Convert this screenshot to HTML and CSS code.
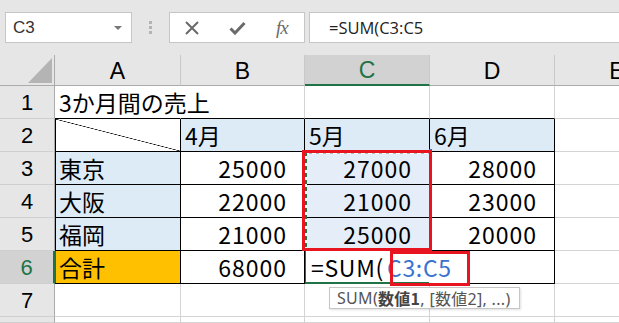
FILE: index.html
```html
<!DOCTYPE html>
<html lang="ja">
<head>
<meta charset="utf-8">
<title>SUM</title>
<link rel="stylesheet" href="styles.css">
</head>
<body>
<div class="topbar">
  <div class="namebox"><span class="ref">C3</span><span class="dd"></span></div>
  <div class="grip"><i></i><i></i><i></i></div>
  <div class="fxbox">
    <svg class="ic-x" width="16" height="16" viewBox="0 0 16 16"><path d="M2 2L14 14M14 2L2 14" stroke="#6a6a6a" stroke-width="2" fill="none"/></svg>
    <svg class="ic-ok" width="17" height="14" viewBox="0 0 17 14"><path d="M1.5 7.5L6 12L15.5 2" stroke="#6a6a6a" stroke-width="3" fill="none"/></svg>
    <span class="fx">fx</span>
  </div>
  <div class="formula">=SUM(C3:C5</div>
</div>
<div class="sheet">
  <div class="corner"><div class="tri"></div></div>
  <div class="ch">A</div>
  <div class="ch">B</div>
  <div class="ch sel">C</div>
  <div class="ch">D</div>
  <div class="ch">E</div>

  <div class="rh">1</div>
  <div class="c tt ov">3か月間の売上</div>
  <div class="c tt"></div>
  <div class="c tt"></div>
  <div class="c tt"></div>
  <div class="c"></div>

  <div class="rh">2</div>
  <div class="c t la diag"></div>
  <div class="c t blue">4月</div>
  <div class="c t blue">5月</div>
  <div class="c t blue">6月</div>
  <div class="c"></div>

  <div class="rh">3</div>
  <div class="c t la blue">東京</div>
  <div class="c t n">25000</div>
  <div class="c t n selc">27000</div>
  <div class="c t n">28000</div>
  <div class="c"></div>

  <div class="rh">4</div>
  <div class="c t la blue">大阪</div>
  <div class="c t n">22000</div>
  <div class="c t n selc">21000</div>
  <div class="c t n">23000</div>
  <div class="c"></div>

  <div class="rh">5</div>
  <div class="c t la blue">福岡</div>
  <div class="c t n">21000</div>
  <div class="c t n selc">25000</div>
  <div class="c t n">20000</div>
  <div class="c"></div>

  <div class="rh sel">6</div>
  <div class="c t la org">合計</div>
  <div class="c t n">68000</div>
  <div class="c t edit">=SUM(<span class="refc">C3:C5</span><span class="caret"></span></div>
  <div class="c t"></div>
  <div class="c"></div>

  <div class="rh">7</div>
  <div class="c"></div>
  <div class="c"></div>
  <div class="c"></div>
  <div class="c"></div>
  <div class="c"></div>

  <div class="rh"></div>
  <div class="c"></div>
  <div class="c"></div>
  <div class="c"></div>
  <div class="c"></div>
  <div class="c"></div>

  <div class="ants"></div>
  <div class="hnd h1"></div>
  <div class="hnd h2"></div>
  <div class="hnd h3"></div>
  <div class="redbox r1"></div>
  <div class="redbox r2"></div>
  <div class="tip">SUM(<b>数値1</b>, [数値2], ...)</div>
</div>
</body>
</html>
```
FILE: styles.css
```css
* { box-sizing: border-box; margin: 0; padding: 0; }
html, body { width: 619px; height: 323px; overflow: hidden; }
body { background: #fff; font-family: "Liberation Sans", Arial, sans-serif; }

.topbar { height: 55px; background: #e6e6e6; display: flex; align-items: flex-start; padding: 12px 0 0 5px; }
.namebox { width: 127px; height: 31px; background: #fff; border: 1px solid #c6c6c6; display: flex; align-items: center; justify-content: space-between; padding: 0 9px 0 7px; font-size: 17px; color: #333; }
.dd { width: 0; height: 0; border-left: 4px solid transparent; border-right: 4px solid transparent; border-top: 4px solid #777; }
.grip { display: flex; flex-direction: column; gap: 2px; margin: 9px 17px 0 17px; }
.grip i { display: block; width: 3px; height: 3px; background: #b4b4b4; }
.fxbox { width: 136px; height: 31px; background: #fff; border: 1px solid #c6c6c6; display: flex; align-items: center; padding-left: 14px; }
.ic-ok { margin-left: 29px; }
.fx { margin-left: 30px; font-family: "Liberation Serif", "Times New Roman", serif; font-style: italic; font-size: 19px; color: #6a6a6a; letter-spacing: -1px; }
.formula { flex: 1; margin-left: 4px; height: 31px; background: #fff; border: 1px solid #c6c6c6; border-right: none; padding-left: 19px; display: flex; align-items: center; font-family: "Open Sans", sans-serif; font-size: 16.5px; color: #222; }

.sheet { position: relative; display: grid; grid-template-columns: 55px 126px 124px 125px 125px 125px; grid-template-rows: 31px repeat(7, 33px) 6px; }
.corner { background: #e6e6e6; border-right: 1px solid #ababab; border-bottom: 1px solid #ababab; display: flex; align-items: flex-end; justify-content: flex-end; padding: 0 2px 2px 0; }
.tri { width: 24px; height: 25px; background: #b4b4b4; clip-path: polygon(100% 0, 100% 100%, 0 100%); }
.ch { background: #e6e6e6; border-right: 1px solid #c8c8c8; border-bottom: 1px solid #ababab; display: flex; align-items: center; justify-content: center; font-size: 23px; color: #000; padding-top: 2px; }
.ch.sel { background: #d2d2d2; color: #217346; border-bottom: 2px solid #217346; }
.rh { background: #e6e6e6; border-right: 1px solid #ababab; border-bottom: 1px solid #cfcfcf; display: flex; align-items: center; justify-content: center; font-size: 22px; color: #000; padding-top: 2px; }
.rh.sel { background: #d2d2d2; color: #217346; border-right: 2px solid #217346; }

.c { background: #fff; border-right: 1px solid #d4d4d4; border-bottom: 1px solid #d4d4d4; display: flex; align-items: center; padding-left: 4px; font-family: "Noto Sans CJK JP", sans-serif; font-size: 23px; color: #000; white-space: nowrap; }
.n { justify-content: flex-end; padding-right: 17px; letter-spacing: 1px; }
.t { border-right-color: #000; border-bottom-color: #000; }
.tt { border-bottom-color: #000; }
.la { box-shadow: inset 1px 0 0 #000; }
.blue { background: #ddebf7; }
.selc { background: #e5edf8; }
.org { background: #ffc000; box-shadow: inset 1px 0 0 #217346; }
.diag { background: linear-gradient(to top right, transparent calc(50% - 0.6px), #000 50%, transparent calc(50% + 0.6px)); }
.ov { position: relative; z-index: 1; border-right-color: #fff; overflow: visible; }
.edit { position: relative; z-index: 1; overflow: visible; border-right-color: transparent; padding-left: 6px; letter-spacing: 0.7px; box-shadow: inset 1px 0 0 #217346, inset 0 -1px 0 #217346; border-bottom-color: #217346; }
.refc { color: #3b72cf; margin-left: 3px; }
.caret { display: inline-block; width: 1px; height: 21px; background: #000; margin-left: 1px; }

.ants { position: absolute; left: 305px; top: 97px; width: 126px; height: 99px;
  background:
    repeating-linear-gradient(to bottom, #217346 0 4px, #ffffff 4px 7px) left top / 2px 100% no-repeat,
    repeating-linear-gradient(to right, #ffffff 0 4px, #a9bdb1 4px 7px) left top / 100% 2px no-repeat; }
.hnd { position: absolute; width: 3px; height: 3px; background: #3b6fd1; }
.h1 { left: 429px; top: 94px; }
.h2 { left: 302px; top: 193px; }
.h3 { left: 429px; top: 193px; }
.redbox { position: absolute; border: 3px solid #e8141f; z-index: 3; }
.r1 { left: 302px; top: 95px; width: 130px; height: 101px; }
.r2 { left: 390px; top: 196px; width: 80px; height: 35px; }
.tip { position: absolute; left: 329px; top: 232px; width: 191px; height: 22px; background: #fff; border: 1px solid #c6c6c6; box-shadow: 1px 1px 2px rgba(0,0,0,0.12); z-index: 4; font-family: "Noto Sans", "Noto Sans CJK JP", sans-serif; font-size: 16px; letter-spacing: 0.3px; color: #555; display: flex; align-items: center; padding-left: 7px; white-space: nowrap; }
.tip b { font-family: "Noto Sans CJK JP", sans-serif; font-weight: 700; color: #444; }
```
